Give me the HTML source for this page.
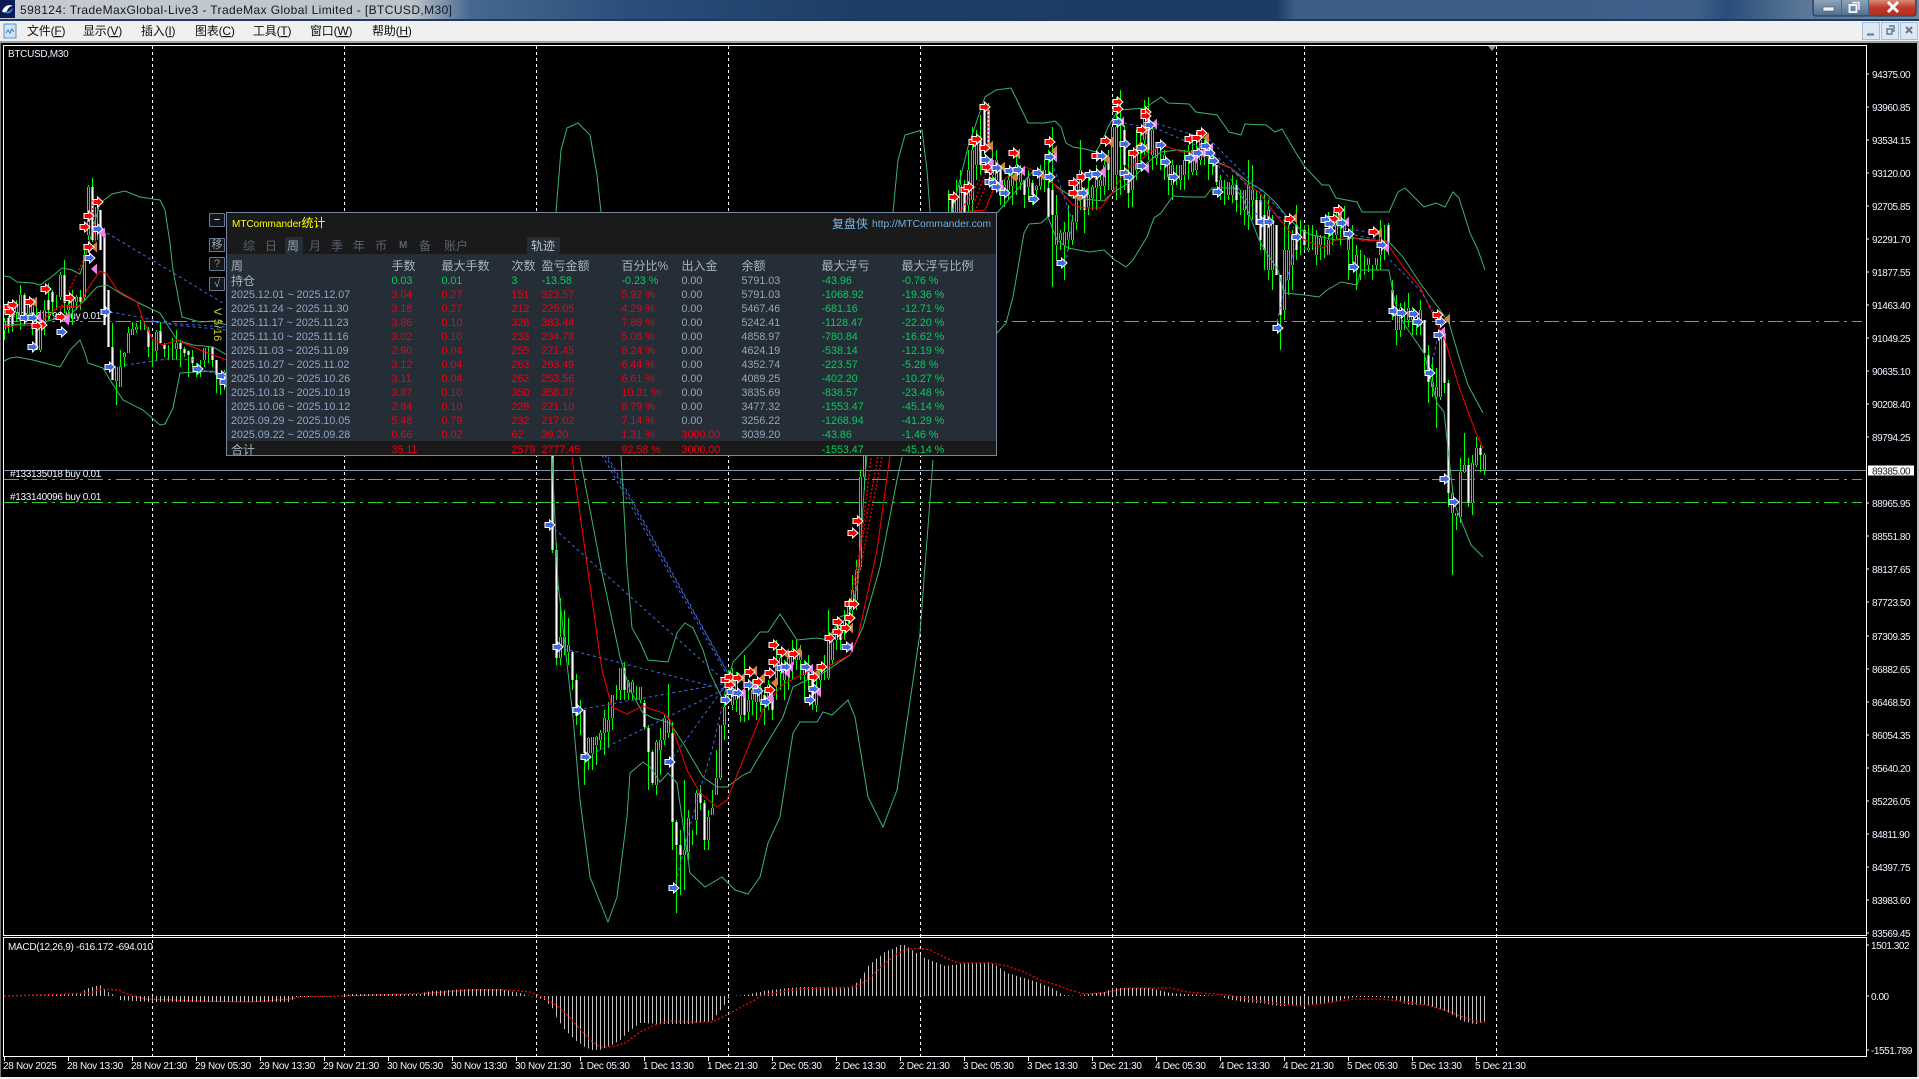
<!DOCTYPE html>
<html><head><meta charset="utf-8"><title>TradeMax</title>
<style>
html,body{margin:0;padding:0;background:#000;width:1919px;height:1079px;overflow:hidden}
body{position:relative;font-family:"Liberation Sans","Noto Sans CJK SC",sans-serif}
svg{position:absolute;left:0;top:0;display:block}
text{font-family:"Liberation Sans","Noto Sans CJK SC",sans-serif}
.ax text{font-size:10px;fill:#eef4ff;letter-spacing:-.3px}
.pr text{font-size:10px;fill:#eef4ff;letter-spacing:-.45px}
.mn text{font-size:12px;fill:#111;letter-spacing:-.2px}
.bb{fill:none;stroke:#3cb371;stroke-width:1}
.ma{fill:none;stroke:#f00;stroke-width:1}
.bd{fill:none;stroke:#4169e1;stroke-width:1;stroke-dasharray:3 3}
.rd{fill:none;stroke:#f00;stroke-width:1.3;stroke-dasharray:2 2}
.mk{fill:none;stroke:none}
#panel{position:absolute;left:226px;top:212px;width:769px;height:242px;border:1px solid #7787a0;background:#1a1a1a;overflow:hidden;font-size:10.7px;line-height:14px}
#panel .tb{position:absolute;left:0;top:41px;width:769px;height:187px;background:#252d37}
#panel b{position:absolute;font-weight:normal;white-space:nowrap}
.r{position:absolute;left:0;width:769px;height:14px;color:#ee0010}
.r i{position:absolute;font-style:normal;white-space:nowrap;top:0}
.r i:nth-child(1){left:4px;color:#8ea8c8}
.r i:nth-child(2){left:164.5px}
.r i:nth-child(3){left:214.5px}
.r i:nth-child(4){left:284.5px}
.r i:nth-child(5){left:314.5px}
.r i:nth-child(6){left:394.5px}
.r i:nth-child(7){left:454.5px;color:#98a6b8}
.r i:nth-child(8){left:514.5px;color:#98a6b8}
.r i:nth-child(9){left:594.5px;color:#00cf5c}
.r i:nth-child(10){left:674.5px;color:#00cf5c}
.r i.x{color:#ee0010}
.h{font-size:12px;color:#a9b5c5}
.h i{color:#a9b5c5!important}
.g,.g i{color:#00cf5c!important}
.g i:nth-child(1){color:#a9b5c5!important;font-size:12px}
.g i:nth-child(7),.g i:nth-child(8){color:#98a6b8!important}
.f i:nth-child(1){font-size:12px;color:#a9b5c5}
.tab{position:absolute;top:25px;font-size:12px;color:#59626c;line-height:16px;white-space:nowrap}
.btn{position:absolute;left:209px;width:14px;height:12px;border:1px solid #66788f;background:#12171d;color:#9aa4ae;font-size:11px;line-height:12px;text-align:center;border-radius:1px}
</style></head><body>
<svg width="1919" height="1079" viewBox="0 0 1919 1079" xmlns="http://www.w3.org/2000/svg">
<defs>
<linearGradient id="tg" x1="0" x2="1" y1="0" y2="0">
<stop offset="0" stop-color="#c6cbd1"/><stop offset=".215" stop-color="#bcc4cc"/><stop offset=".245" stop-color="#46688f"/><stop offset=".33" stop-color="#2a4e78"/><stop offset=".45" stop-color="#1c3d66"/><stop offset=".665" stop-color="#1c3c66"/><stop offset=".675" stop-color="#3c5d85"/><stop offset=".885" stop-color="#3d5f88"/><stop offset=".9" stop-color="#2a4d78"/><stop offset=".94" stop-color="#5a7898"/><stop offset="1" stop-color="#6a86a4"/>
</linearGradient>
<linearGradient id="cg" x1="0" x2="0" y1="0" y2="1"><stop offset="0" stop-color="#d98a78"/><stop offset=".5" stop-color="#c0392b"/><stop offset="1" stop-color="#b03020"/></linearGradient>
<linearGradient id="wg" x1="0" x2="0" y1="0" y2="1"><stop offset="0" stop-color="#8fa3b8"/><stop offset="1" stop-color="#51708f"/></linearGradient>
<pattern id="p" width="4" height="10" patternUnits="userSpaceOnUse"><rect width="1" height="10" fill="#c4c4c4"/></pattern>
<marker id="mb" markerUnits="userSpaceOnUse" markerWidth="14" markerHeight="14" refX="7" refY="7" overflow="visible"><path d="M2 4.500H6.500V2L12 7 6.500 12V9.500H2Z" fill="#4169e1" stroke="#fff" stroke-width="1"/></marker>
<marker id="mr" markerUnits="userSpaceOnUse" markerWidth="14" markerHeight="14" refX="7" refY="7" overflow="visible"><path d="M2 4.500H6.500V2L12 7 6.500 12V9.500H2Z" fill="#f00" stroke="#fff" stroke-width="1"/></marker>
<marker id="mt" markerUnits="userSpaceOnUse" markerWidth="14" markerHeight="14" refX="7" refY="7" overflow="visible"><path d="M10 1.5V12.5L4 7Z" fill="#cd853f"/></marker>
<marker id="mp" markerUnits="userSpaceOnUse" markerWidth="14" markerHeight="14" refX="7" refY="7" overflow="visible"><path d="M10 1.5V12.5L4 7Z" fill="#ee82ee"/></marker>
<path id="W" fill="none" d="M8 318V326M12 309V326M24 295V320M36 325V350M48 300V310M52 292V302M64 275V303M80 297V302M92 187V240M100 210V250M104 233V325M108 290V347M112 347V380M148 330V347M160 331V343M164 345V349M180 343V349M184 349V353M188 351V355M192 357V363M212 347V360M216 360V375M552 455V550M556 550V658M572 652V680M576 680V716M584 710V753M624 668V690M644 703V727M648 728V752M652 752V783M672 733V822M676 822V845M680 845V855M700 793V803M704 803V840M744 690V715M764 695V703M772 695V710M808 665V680M812 670V700M840 630V640M952 195V212M964 190V212M980 140V165M984 108V150M988 110V145M1000 170V195M1024 180V195M1032 183V195M1048 188V217M1052 190V215M1084 195V210M1108 157V170M1124 130V165M1128 172V193M1148 110V150M1216 165V182M1236 185V200M1256 200V225M1260 200V240M1264 215V250M1276 225V275M1280 275V315M1296 225V250M1304 230V245M1388 225V243M1392 290V315M1424 320V353M1428 355V382M1444 333V383M1448 383V493M1468 465V503M1480 448V455"/>
<path id="H" fill="none" d="M4 322V330M16 306V312M20 295V315M28 305V314M32 298V318M40 325V350M44 310V325M60 275V297M68 305V310M72 299V308M76 297V302M84 255V297M88 187V235M96 207V240M116 367V381M120 367V387M124 353V357M128 333V353M132 329V335M136 327V330M156 332V351M176 343V349M204 348V360M224 372V385M560 637V658M564 637V647M568 645V652M588 738V753M592 737V753M596 737V745M600 733V740M604 718V733M608 720V732M612 695V718M620 668V690M628 682V693M632 682V693M640 687V700M656 742V785M660 740V750M664 718V740M668 720V733M684 850V855M688 818V852M696 793V820M708 817V840M712 808V815M716 778V795M720 725V778M724 707V725M732 690V705M736 680V700M740 695V715M748 700V712M752 690V700M756 692V702M760 688V702M768 685V700M776 660V685M780 658V672M784 665V680M788 655V675M792 650V665M796 650V660M800 650V660M804 665V675M816 690V705M820 672V680M828 635V678M832 642V660M836 627V640M844 620V630M848 605V615M852 590V610M856 570V600M860 477V567M864 456V477M956 196V212M960 185V212M968 170V205M972 150V200M976 140V165M992 160V175M996 160V180M1004 185V195M1008 180V190M1012 175V186M1016 165V180M1020 170V182M1028 178V187M1036 186V190M1040 172V186M1044 170V180M1056 215V245M1060 233V240M1064 232V245M1068 232V240M1072 222V240M1076 185V222M1080 170V200M1088 195V207M1092 187V198M1096 178V188M1100 180V186M1104 165V186M1112 127V190M1116 127V175M1132 155V190M1136 150V170M1144 115V140M1152 130V155M1156 148V158M1164 155V165M1168 163V177M1172 165V185M1180 165V180M1184 160V175M1192 150V172M1196 150V170M1200 140V160M1220 180V190M1228 182V195M1232 185V195M1244 190V210M1248 185V215M1252 190V200M1268 210V270M1272 220V270M1284 250V310M1288 250V280M1292 235V265M1308 248V250M1316 235V255M1320 238V245M1328 240V255M1336 225V235M1344 225V235M1348 235V250M1356 255V270M1368 258V265M1376 258V265M1380 235V255M1396 310V330M1400 308V330M1408 308V320M1412 310V320M1420 310V325M1432 382V387M1436 387V397M1440 332V397M1452 493V513M1456 513V516M1460 472V517M1464 465V472M1472 463V503M1476 448V465M1484 455V470"/>
</defs>
<!-- chrome -->
<rect width="1919" height="19" fill="url(#tg)"/>
<rect y="19" width="1919" height="2" fill="#1f3a5f"/>
<rect y="21" width="1919" height="20" fill="#f0f0f0"/>
<rect y="41" width="1919" height="2" fill="#a0a0a0"/>
<rect x="0" y="43" width="1" height="1034" fill="#777"/>
<rect x="1917" y="43" width="2" height="1034" fill="#bdbdbd"/>
<rect y="1077" width="1919" height="2" fill="#f0f0f0"/>
<rect width="15" height="18" fill="#0c1a58"/>
<path d="M2 11C5 5 9 4 13 6 10 6 8 8 7 11 5 13 3 13 2 11Z" fill="#fff"/><path d="M6 12C9 12 11 10 13 8 12 12 9 14 6 13Z" fill="#3fa7e0"/>
<text x="20" y="14" font-size="12" fill="#14181d" textLength="432" lengthAdjust="spacing">598124: TradeMaxGlobal-Live3 - TradeMax Global Limited - [BTCUSD,M30]</text>
<!-- window buttons -->
<path d="M1813 0V13Q1813 16 1816 16H1913Q1916 16 1916 13V0Z" fill="#4a6a8c" stroke="#26384d"/>
<rect x="1814" y="0" width="27" height="15" fill="url(#wg)"/><rect x="1842" y="0" width="26" height="15" fill="url(#wg)"/><rect x="1869" y="0" width="46" height="15" fill="url(#cg)"/>
<rect x="1823" y="7" width="11" height="4" fill="#f4f4f4" stroke="#44556a" stroke-width=".6"/>
<path d="M1852 2.5H1859V10" fill="none" stroke="#eee" stroke-width="1.5"/><rect x="1849.5" y="5" width="7" height="7" fill="none" stroke="#f2f2f2" stroke-width="2"/>
<path d="M1888 2L1898 12M1898 2L1888 12" stroke="#fff" stroke-width="3"/>
<!-- menu -->
<rect x="4" y="24" width="12" height="14" fill="#cfe3f5" stroke="#5f93c5"/><path d="M6 33l2-3 2 3 2-4 2 3" fill="none" stroke="#4878b0"/>
<g class="mn">
<text x="27" y="35">文件(<tspan text-decoration="underline">F</tspan>)</text>
<text x="83" y="35">显示(<tspan text-decoration="underline">V</tspan>)</text>
<text x="141" y="35">插入(<tspan text-decoration="underline">I</tspan>)</text>
<text x="195" y="35">图表(<tspan text-decoration="underline">C</tspan>)</text>
<text x="253" y="35">工具(<tspan text-decoration="underline">T</tspan>)</text>
<text x="310" y="35">窗口(<tspan text-decoration="underline">W</tspan>)</text>
<text x="372" y="35">帮助(<tspan text-decoration="underline">H</tspan>)</text>
</g>
<g fill="#dde8f5" stroke="#a8bdd6"><rect x="1862.5" y="22.5" width="17" height="17"/><rect x="1881.5" y="22.5" width="17" height="17"/><rect x="1900.5" y="22.5" width="17" height="17"/></g>
<path d="M1867 34.500H1874" stroke="#66788c" stroke-width="2"/>
<path d="M1889 26H1894V31H1892M1887 29H1892V34H1887Z" fill="none" stroke="#66788c" stroke-width="1.400"/>
<path d="M1906 27L1912 33M1912 27L1906 33" stroke="#66788c" stroke-width="2"/>
<!-- chart area -->
<rect x="1" y="43" width="1916" height="1034" fill="#000"/>
<path d="M152.500 46V1056M344.500 46V1056M536.500 46V1056M728.500 46V1056M920.500 46V1056M1112.500 46V1056M1304.500 46V1056M1496.500 46V1056" stroke="#fff" stroke-dasharray="3 3"/>
<path d="M4 321.500H1862M4 479.500H1862M4 502.500H1862" stroke="#32cd32" stroke-dasharray="15 5 3 5" fill="none"/>
<path d="M3 470.500H1866" stroke="#8393a8"/>
<g class="ax"><text x="10" y="319">#133127798 buy 0.01</text><text x="10" y="477">#133135018 buy 0.01</text><text x="10" y="500">#133140096 buy 0.01</text>
<text x="8" y="57">BTCUSD,M30</text><text x="8" y="950" fill="#dfe8f2">MACD(12,26,9) -616.172 -694.010</text></g>
<!-- candles -->
<g transform="translate(.5 0)" shape-rendering="crispEdges">
<path fill="none" stroke="#0f0" d="M4 318V340M8 316V333M12 305V332M16 300V322M20 285V330M24 293V325M28 302V318M32 298V335M36 305V350M40 310V352M44 300V335M48 283V320M52 290V315M56 295V310M60 272V300M64 260V313M68 300V320M72 290V325M76 295V310M80 290V310M84 245V300M88 185V240M92 178V242M96 207V240M100 210V250M104 233V325M108 290V347M112 323V380M116 367V405M120 350V387M124 352V367M128 327V353M132 322V335M136 323V333M140 320V330M144 322V330M148 327V357M152 340V367M156 330V360M160 322V343M164 343V357M168 345V360M172 338V360M176 330V360M180 340V367M184 347V357M188 350V377M192 350V367M196 363V377M200 360V377M204 348V367M208 347V363M212 347V367M216 360V393M220 373V395M224 370V390M552 450V553M556 543V665M560 598V665M564 610V655M568 618V665M572 651V690M576 674V725M580 700V735M584 710V785M588 737V770M592 737V770M596 736V765M600 730V750M604 710V755M608 702V748M612 695V730M616 685V700M620 672V700M624 662V700M628 680V700M632 680V700M636 686V700M640 690V703M644 700V730M648 725V790M652 750V785M656 740V795M660 728V775M664 715V745M668 684V738M672 722V850M676 820V913M680 830V895M684 780V890M688 810V860M692 830V845M696 790V835M700 785V810M704 800V850M708 810V850M712 790V815M716 750V780M720 725V780M724 700V740M728 670V700M732 668V710M736 672V712M740 690V722M744 655V722M748 683V720M752 680V715M756 690V720M760 680V712M764 690V725M768 680V710M772 690V720M776 640V700M780 650V690M784 660V700M788 650V690M792 640V680M796 640V670M800 645V680M804 660V700M808 655V690M812 665V710M816 680V712M820 670V690M824 655V680M828 610V680M832 640V665M836 620V650M840 625V650M844 610V640M848 600V625M852 575V620M856 560V610M860 470V570M864 456V490M948 190V212M952 195V212M956 180V212M960 170V212M964 180V212M968 150V212M972 127V212M976 130V180M980 115V175M984 103V155M988 103V150M992 147V185M996 150V190M1000 165V205M1004 180V207M1008 170V200M1012 170V205M1016 155V195M1020 165V190M1024 180V208M1028 170V200M1032 180V205M1036 185V200M1040 165V190M1044 160V192M1048 150V215M1052 127V287M1056 195V260M1060 230V250M1064 222V280M1068 205V250M1072 215V245M1076 185V230M1080 140V210M1084 187V233M1088 175V215M1092 185V210M1096 165V210M1100 175V200M1104 155V195M1108 150V190M1112 128V175M1116 97V200M1120 90V195M1124 125V190M1128 150V208M1132 150V207M1136 130V180M1140 130V170M1144 100V155M1148 97V160M1152 125V170M1156 143V165M1160 145V170M1164 150V180M1168 165V195M1172 160V200M1176 165V185M1180 165V190M1184 150V190M1188 145V180M1192 140V175M1196 135V175M1200 130V165M1204 140V165M1208 155V180M1212 150V175M1216 165V185M1220 175V200M1224 180V205M1228 185V200M1232 175V203M1236 180V212M1240 190V215M1244 205V225M1248 160V230M1252 165V220M1256 190V225M1260 195V250M1264 195V270M1268 200V280M1272 215V290M1276 225V275M1280 275V350M1284 220V320M1288 225V295M1292 230V290M1296 205V260M1300 220V255M1304 225V250M1308 225V252M1312 225V250M1316 230V265M1320 235V260M1324 235V258M1328 212V255M1332 222V245M1336 210V240M1340 225V245M1344 206V225M1348 230V280M1352 225V268M1356 245V290M1360 250V280M1364 255V275M1368 262V272M1372 265V280M1376 258V270M1380 220V270M1384 225V260M1388 223V255M1392 280V320M1396 295V345M1400 303V337M1404 302V330M1408 293V327M1412 307V335M1416 320V335M1420 300V335M1424 320V373M1428 345V403M1432 357V397M1436 368V428M1440 330V400M1444 333V393M1448 380V507M1452 487V575M1456 513V530M1460 458V523M1464 433V473M1468 458V507M1472 455V515M1476 437V467M1480 445V472M1484 453V475"/>
<use href="#H" stroke="#0f0" stroke-width="3"/><use href="#H" stroke="#000" stroke-width="1"/>
<use href="#W" stroke="#0f0" stroke-width="3"/><use href="#W" stroke="#fff" stroke-width="1"/>
</g>
<!-- bands -->
<polyline class="bb" points="4,276 10,277 17,282 33,283 40,285 50,278 62,268 72,270 80,274 83,265 100,203 112,194 125,191 140,197 160,200 165,210 170,243 173,270 182,317 200,322 213,321 227,325"/>
<polyline class="bb" points="4,361 10,358 17,357 33,360 60,367 70,350 80,340 85,353 88,363 103,368 110,380 123,400 143,410 160,425 165,424 173,408 180,373 213,371 227,383"/>
<polyline class="bb" points="4,325 40,323 70,315 83,302 97,287 107,285 123,295 143,305 160,313 177,340 193,345 213,347 227,355"/>
<polyline class="bb" points="556,212 561,150 567,128 578,123 590,135 597,175 601,212"/>
<polyline class="bb" points="893,212 898,160 905,135 922,130 927,170 930,212"/>
<polyline class="bb" points="580,457 602,573 620,657 630,690 643,713 653,718 670,723 683,743 703,777 717,787 727,787 743,775 750,772 763,750 783,717 793,687 807,680 823,673 850,655 863,627 880,567 897,480 902,457"/>
<polyline class="bb" points="552,457 558,583 573,717 580,800 590,877 608,922 617,897 627,817 630,773 643,762 650,767 660,782 668,773 677,783 690,873 705,887 722,877 735,890 748,894 760,877 768,843 780,817 793,733 800,722 817,722 823,712 832,715 848,700 855,717 868,797 883,827 897,790 920,633 933,460"/>
<polyline class="bb" points="621,455 627,567 632,628 640,642 648,660 668,662 677,633 685,623 693,628 703,650 710,673 723,700 733,662 752,642 760,632 768,632 780,614 797,640 817,638 828,640 840,617 850,613 858,583 865,477 867,455"/>
<polyline class="bb" points="952,212 968,147 985,97 996,90 1011,88 1017,100 1028,123 1045,123 1055,121 1061,127 1066,143 1073,147 1085,149 1096,152 1104,137 1108,127 1118,110 1145,108 1161,97 1168,103 1189,104 1196,112 1217,115 1229,132 1241,135 1245,124 1266,125 1275,132 1282,129 1296,153 1305,167 1322,185 1329,185 1336,198 1357,202 1362,212 1389,212 1398,192 1405,188 1424,207 1436,203 1445,207 1453,192 1459,198 1470,233 1478,250 1485,270"/>
<polyline class="bb" points="997,333 1006,323 1013,297 1024,233 1029,224 1041,223 1048,217 1057,240 1068,248 1089,252 1104,250 1115,260 1126,267 1133,260 1147,237 1154,218 1161,213 1173,196 1189,197 1205,197 1212,188 1234,188 1243,198 1259,240 1268,255 1278,270 1284,293 1305,295 1319,297 1327,290 1341,282 1357,285 1361,270 1389,270 1393,293 1398,313 1406,327 1424,353 1437,403 1444,412 1447,440 1454,503 1461,520 1471,545 1483,557"/>
<polyline class="bb" points="997,213 1010,198 1034,170 1055,185 1073,198 1104,201 1112,193 1129,183 1147,163 1161,152 1178,150 1192,152 1206,155 1217,162 1231,168 1248,182 1262,190 1276,203 1287,217 1301,230 1312,235 1336,240 1354,238 1371,240 1389,242 1403,257 1420,283 1438,307 1449,323 1459,357 1468,385 1483,413"/>
<polyline class="ma" points="4,327 13,326 33,325 43,320 58,307 80,306 87,290 100,271 107,274 117,290 137,302 143,320 153,340 163,345 177,340 193,347 213,355 227,360"/>
<polyline class="ma" points="572,457 585,550 602,670 612,707 627,714 643,706 663,713 670,720 687,770 700,793 717,807 727,800 743,760 763,710 782,685 807,672 827,667 850,655 858,637 877,550 890,455"/>
<polyline class="ma" points="965,212 985,210 994,188 1010,175 1025,167 1038,172 1052,182 1062,193 1073,205 1085,208 1101,208 1112,193 1126,170 1140,160 1161,145 1171,148 1182,152 1196,152 1217,163 1231,168 1248,185 1259,192 1276,215 1291,233 1305,240 1322,248 1336,240 1347,235 1364,241 1385,240 1403,267 1420,287 1445,340 1459,387 1476,433 1483,448"/>
<!-- dashed trade lines -->
<path class="bd" d="M107 233L223 303M110 312L140 317 173 325 227 330M150 322L227 327M113 367L167 359 197 360M198 369L225 376M550 525L727 683M558 647L727 690M578 710L727 683M586 757L727 688M670 762L727 683M674 888L697 800 712 750 722 707M602 455L727 675M605 455L730 677M608 457L732 680M1118 122L1160 130 1190 143 1210 150 1240 178 1266 207 1294 228M1050 157L1060 185 1072 220 1066 263M1326 225L1374 233M1349 234L1380 240M1390 260L1420 290 1440 322M1438 335L1430 373M1297 237L1275 330M1214 161L1240 190 1262 222M1145 120L1210 140 1260 190 1290 220"/>
<path class="rd" d="M878 457L850 603M871 458L855 593M882 457L856 590M988 110V150M970 212L987 170M960 212L980 180M975 212L990 175M92 200L96 250M60 310L88 250M846 640L830 628"/>
<!-- markers -->
<polyline class="mk" style="marker:url(#mt)" points="34,302 67,317 94,247 742,678 754,671 762,678 774,683 786,654 798,652 733,682 817,673 850,628 990,146 1002,167 1017,154 1054,151 1041,175 1014,177 1078,197 1095,176 1106,159 1110,142 1145,148 1138,147 1145,130 1206,138 1294,218 1339,218 1379,233 1447,319"/>
<polyline class="mk" style="marker:url(#mp)" points="38,317 102,233 94,269 66,320 742,693 770,697 790,667 787,673 810,669 818,692 850,647 755,688 730,691 1121,122 1154,124 1146,168 1022,171 1000,185 990,162 1085,193 1102,172 1054,157 1210,148 1202,153 1194,158 1346,222 1386,248 1442,332"/>
<polyline class="mk" style="marker:url(#mr)" points="9,307 13,305 10,312 30,302 46,289 42,325 37,326 61,317 70,298 85,227 89,216 98,202 89,247 726,680 730,677 730,685 738,678 750,672 758,682 770,673 774,645 774,662 770,690 782,652 794,654 814,677 822,667 830,638 838,622 838,632 846,628 850,618 850,604 854,604 853,533 858,521 985,107 974,142 977,139 985,148 966,190 969,187 954,197 990,170 987,167 1014,153 1050,142 1074,183 1082,177 1074,193 1097,156 1106,141 1118,102 1118,109 1146,112 1146,116 1142,130 1134,153 1190,139 1197,138 1202,133 1290,219 1339,210 1334,219 1374,232 1438,315"/>
<polyline class="mk" style="marker:url(#mb)" points="25,318 33,318 33,347 62,332 98,229 90,258 106,312 110,367 198,369 222,376 225,382 550,525 558,647 578,710 586,757 670,762 674,888 726,700 732,692 738,693 749,685 758,691 766,702 782,668 786,667 806,667 814,689 810,700 847,647 986,160 997,168 1010,171 1018,170 1038,173 1050,177 1050,157 1034,199 1005,193 990,182 994,183 997,187 1062,263 1090,175 1097,174 1102,156 1083,193 1118,122 1125,144 1125,173 1129,177 1142,148 1142,166 1150,125 1161,145 1166,162 1174,177 1190,158 1198,153 1206,146 1210,153 1214,161 1218,192 1262,222 1269,222 1278,328 1297,237 1326,220 1330,224 1330,231 1342,223 1349,234 1354,267 1382,245 1394,311 1402,313 1414,314 1418,322 1441,322 1439,335 1430,373 1445,479 1454,502"/>
<!-- MACD -->
<path shape-rendering="crispEdges" fill="url(#p)" d="M4 996L40 995 80 993 88 988 100 985 108 992 116 996 120 1000 152 1002 290 1002 295 997 300 997 340 996 350 994 420 994 430 991 470 989 500 989 520 993 530 996 545 1000 553 1009 557 1018 565 1030 575 1040 585 1047 592 1050 600 1050 612 1045 620 1040 628 1032 640 1023 660 1024 690 1024 712 1021 724 1006 730 996 745 995 755 993 770 990 790 988 800 987 840 987 850 988 856 983 862 977 868 966 875 960 885 952 895 948 900 945 905 945 915 952 925 958 945 966 960 964 990 962 999 967 1007 973 1024 978 1040 983 1052 988 1060 993 1064 995 1076 996 1089 994 1105 992 1113 988 1126 988 1150 988 1170 993 1203 995 1220 996 1228 999 1244 1002 1260 1003 1280 1006 1300 1005 1320 1004 1340 1000 1355 997 1380 997 1395 999 1400 1002 1410 1005 1425 1005 1440 1009 1450 1013 1460 1020 1470 1023 1478 1024 1488 1020 1488 996Z"/>
<polyline class="rd" points="4,996 40,995 90,993 100,989 118,990 128,994 145,999 200,1001 250,1002 290,999 300,997 340,996 380,995 430,993 470,990 510,990 530,992 545,998 560,1008 570,1018 590,1040 600,1047 612,1047 625,1043 640,1032 655,1025 670,1021 690,1022 712,1022 725,1016 745,1005 755,1000 760,996 780,992 800,989 820,988 840,988 855,987 868,980 880,968 895,955 905,950 918,948 930,950 946,958 958,963 991,963 1007,966 1024,972 1040,980 1056,985 1073,991 1085,994 1101,993 1113,991 1126,988 1171,988 1187,992 1228,995 1252,1000 1280,1004 1300,1006 1320,1004 1340,1001 1355,999 1380,999 1400,1001 1425,1005 1445,1010 1460,1016 1475,1021 1485,1023"/>
<!-- frames -->
<path d="M3.500 45.500H1866.500V935.500H3.500ZM3.500 937.500H1866.500V1056.500H3.500Z" fill="none" stroke="#fff"/>
<path d="M1866 74H1869M1866 107H1869M1866 140H1869M1866 173H1869M1866 206H1869M1866 239H1869M1866 272H1869M1866 305H1869M1866 338H1869M1866 371H1869M1866 404H1869M1866 437H1869M1866 503H1869M1866 536H1869M1866 569H1869M1866 602H1869M1866 636H1869M1866 669H1869M1866 702H1869M1866 735H1869M1866 768H1869M1866 801H1869M1866 834H1869M1866 867H1869M1866 900H1869M1866 933H1869M1866 945H1869M1866 996H1869M1866 1050H1869" stroke="#fff"/>
<path d="M4.500 1056V1061M68.500 1056V1061M132.500 1056V1061M196.500 1056V1061M260.500 1056V1061M324.500 1056V1061M388.500 1056V1061M452.500 1056V1061M516.500 1056V1061M580.500 1056V1061M644.500 1056V1061M708.500 1056V1061M772.500 1056V1061M836.500 1056V1061M900.500 1056V1061M964.500 1056V1061M1028.500 1056V1061M1092.500 1056V1061M1156.500 1056V1061M1220.500 1056V1061M1284.500 1056V1061M1348.500 1056V1061M1412.500 1056V1061M1476.500 1056V1061" stroke="#fff"/>
<path d="M1488 46H1496L1492 51Z" fill="#8393a8"/>
<g class="pr">
<text x="1872" y="78">94375.00</text><text x="1872" y="111">93960.85</text><text x="1872" y="144">93534.15</text><text x="1872" y="177">93120.00</text><text x="1872" y="210">92705.85</text><text x="1872" y="243">92291.70</text><text x="1872" y="276">91877.55</text><text x="1872" y="309">91463.40</text><text x="1872" y="342">91049.25</text><text x="1872" y="375">90635.10</text><text x="1872" y="408">90208.40</text><text x="1872" y="441">89794.25</text><text x="1872" y="507">88965.95</text><text x="1872" y="540">88551.80</text><text x="1872" y="573">88137.65</text><text x="1872" y="606">87723.50</text><text x="1872" y="640">87309.35</text><text x="1872" y="673">86882.65</text><text x="1872" y="706">86468.50</text><text x="1872" y="739">86054.35</text><text x="1872" y="772">85640.20</text><text x="1872" y="805">85226.05</text><text x="1872" y="838">84811.90</text><text x="1872" y="871">84397.75</text><text x="1872" y="904">83983.60</text><text x="1872" y="937">83569.45</text>
<text x="1871" y="949">1501.302</text><text x="1871" y="1000">0.00</text><text x="1871" y="1054">-1551.789</text>
</g>
<rect x="1868" y="465.500" width="46" height="10" fill="#fff"/>
<text x="1872" y="474.500" font-size="10" fill="#222" letter-spacing="-.45">89385.00</text>
<g class="ax">
<text x="3" y="1069">28 Nov 2025</text><text x="67" y="1069">28 Nov 13:30</text><text x="131" y="1069">28 Nov 21:30</text><text x="195" y="1069">29 Nov 05:30</text><text x="259" y="1069">29 Nov 13:30</text><text x="323" y="1069">29 Nov 21:30</text><text x="387" y="1069">30 Nov 05:30</text><text x="451" y="1069">30 Nov 13:30</text><text x="515" y="1069">30 Nov 21:30</text><text x="579" y="1069">1 Dec 05:30</text><text x="643" y="1069">1 Dec 13:30</text><text x="707" y="1069">1 Dec 21:30</text><text x="771" y="1069">2 Dec 05:30</text><text x="835" y="1069">2 Dec 13:30</text><text x="899" y="1069">2 Dec 21:30</text><text x="963" y="1069">3 Dec 05:30</text><text x="1027" y="1069">3 Dec 13:30</text><text x="1091" y="1069">3 Dec 21:30</text><text x="1155" y="1069">4 Dec 05:30</text><text x="1219" y="1069">4 Dec 13:30</text><text x="1283" y="1069">4 Dec 21:30</text><text x="1347" y="1069">5 Dec 05:30</text><text x="1411" y="1069">5 Dec 13:30</text><text x="1475" y="1069">5 Dec 21:30</text>
</g>
<text x="214" y="308" font-size="11" fill="#d0d030" transform="rotate(90 214 308)" letter-spacing=".3">V 5/16</text>
</svg>
<div class="btn" style="top:213px;color:#fff">−</div>
<div class="btn" style="top:238px">移</div>
<div class="btn" style="top:257px;color:#b08a50">?</div>
<div class="btn" style="top:277px">√</div>
<div id="panel">
<div class="tb"></div>
<b style="left:5px;top:3px;color:#ff0;font-size:10px">MTCommander<span style="font-size:12px">统计</span></b>
<b style="left:605px;top:4px;color:#7ab8e8;font-size:12px">复盘侠</b>
<b style="left:645px;top:5px;color:#6fb0e0;font-size:10.300px">http://MTCommander.com</b>
<b style="left:58px;top:24px;width:18px;height:17px;background:#252d37"></b>
<b style="left:300px;top:24px;width:33px;height:17px;background:#252d37;border-radius:2px"></b>
<span class="tab" style="left:16px">综</span><span class="tab" style="left:38px">日</span><span class="tab" style="left:60px;color:#9aa7b5">周</span><span class="tab" style="left:82px">月</span><span class="tab" style="left:104px">季</span><span class="tab" style="left:126px">年</span><span class="tab" style="left:148px">币</span><span class="tab" style="left:172px;font-size:10px;font-weight:bold">M</span><span class="tab" style="left:192px">备</span><span class="tab" style="left:217px">账户</span><span class="tab" style="left:304px;color:#b8c4d0">轨迹</span>
<div class="r h" style="top:46px"><i>周</i><i>手数</i><i>最大手数</i><i>次数</i><i>盈亏金额</i><i>百分比%</i><i>出入金</i><i>余额</i><i>最大浮亏</i><i>最大浮亏比例</i></div>
<div class="r g" style="top:61px"><i>持仓</i><i>0.03</i><i>0.01</i><i>3</i><i>-13.58</i><i>-0.23 %</i><i>0.00</i><i>5791.03</i><i>-43.96</i><i>-0.76 %</i></div>
<div class="r" style="top:75px"><i>2025.12.01 ~ 2025.12.07</i><i>3.04</i><i>0.27</i><i>151</i><i>323.57</i><i>5.92 %</i><i>0.00</i><i>5791.03</i><i>-1068.92</i><i>-19.36 %</i></div>
<div class="r" style="top:89px"><i>2025.11.24 ~ 2025.11.30</i><i>3.18</i><i>0.27</i><i>212</i><i>225.05</i><i>4.29 %</i><i>0.00</i><i>5467.46</i><i>-681.16</i><i>-12.71 %</i></div>
<div class="r" style="top:103px"><i>2025.11.17 ~ 2025.11.23</i><i>3.86</i><i>0.10</i><i>328</i><i>383.44</i><i>7.89 %</i><i>0.00</i><i>5242.41</i><i>-1128.47</i><i>-22.20 %</i></div>
<div class="r" style="top:117px"><i>2025.11.10 ~ 2025.11.16</i><i>3.02</i><i>0.10</i><i>233</i><i>234.78</i><i>5.08 %</i><i>0.00</i><i>4858.97</i><i>-780.84</i><i>-16.62 %</i></div>
<div class="r" style="top:131px"><i>2025.11.03 ~ 2025.11.09</i><i>2.90</i><i>0.04</i><i>255</i><i>271.45</i><i>6.24 %</i><i>0.00</i><i>4624.19</i><i>-538.14</i><i>-12.19 %</i></div>
<div class="r" style="top:145px"><i>2025.10.27 ~ 2025.11.02</i><i>3.12</i><i>0.04</i><i>263</i><i>263.49</i><i>6.44 %</i><i>0.00</i><i>4352.74</i><i>-223.57</i><i>-5.28 %</i></div>
<div class="r" style="top:159px"><i>2025.10.20 ~ 2025.10.26</i><i>3.11</i><i>0.04</i><i>262</i><i>253.56</i><i>6.61 %</i><i>0.00</i><i>4089.25</i><i>-402.20</i><i>-10.27 %</i></div>
<div class="r" style="top:173px"><i>2025.10.13 ~ 2025.10.19</i><i>3.87</i><i>0.10</i><i>350</i><i>358.37</i><i>10.31 %</i><i>0.00</i><i>3835.69</i><i>-838.57</i><i>-23.48 %</i></div>
<div class="r" style="top:187px"><i>2025.10.06 ~ 2025.10.12</i><i>2.84</i><i>0.10</i><i>228</i><i>221.10</i><i>6.79 %</i><i>0.00</i><i>3477.32</i><i>-1553.47</i><i>-45.14 %</i></div>
<div class="r" style="top:201px"><i>2025.09.29 ~ 2025.10.05</i><i>5.48</i><i>0.79</i><i>232</i><i>217.02</i><i>7.14 %</i><i>0.00</i><i>3256.22</i><i>-1268.94</i><i>-41.29 %</i></div>
<div class="r" style="top:215px"><i>2025.09.22 ~ 2025.09.28</i><i>0.66</i><i>0.02</i><i>62</i><i>39.20</i><i>1.31 %</i><i class="x">3000.00</i><i>3039.20</i><i>-43.86</i><i>-1.46 %</i></div>
<div class="r f" style="top:230px"><i>合计</i><i>35.11</i><i></i><i>2579</i><i>2777.45</i><i>92.58 %</i><i class="x">3000.00</i><i></i><i>-1553.47</i><i>-45.14 %</i></div>
</div>
</body></html>
